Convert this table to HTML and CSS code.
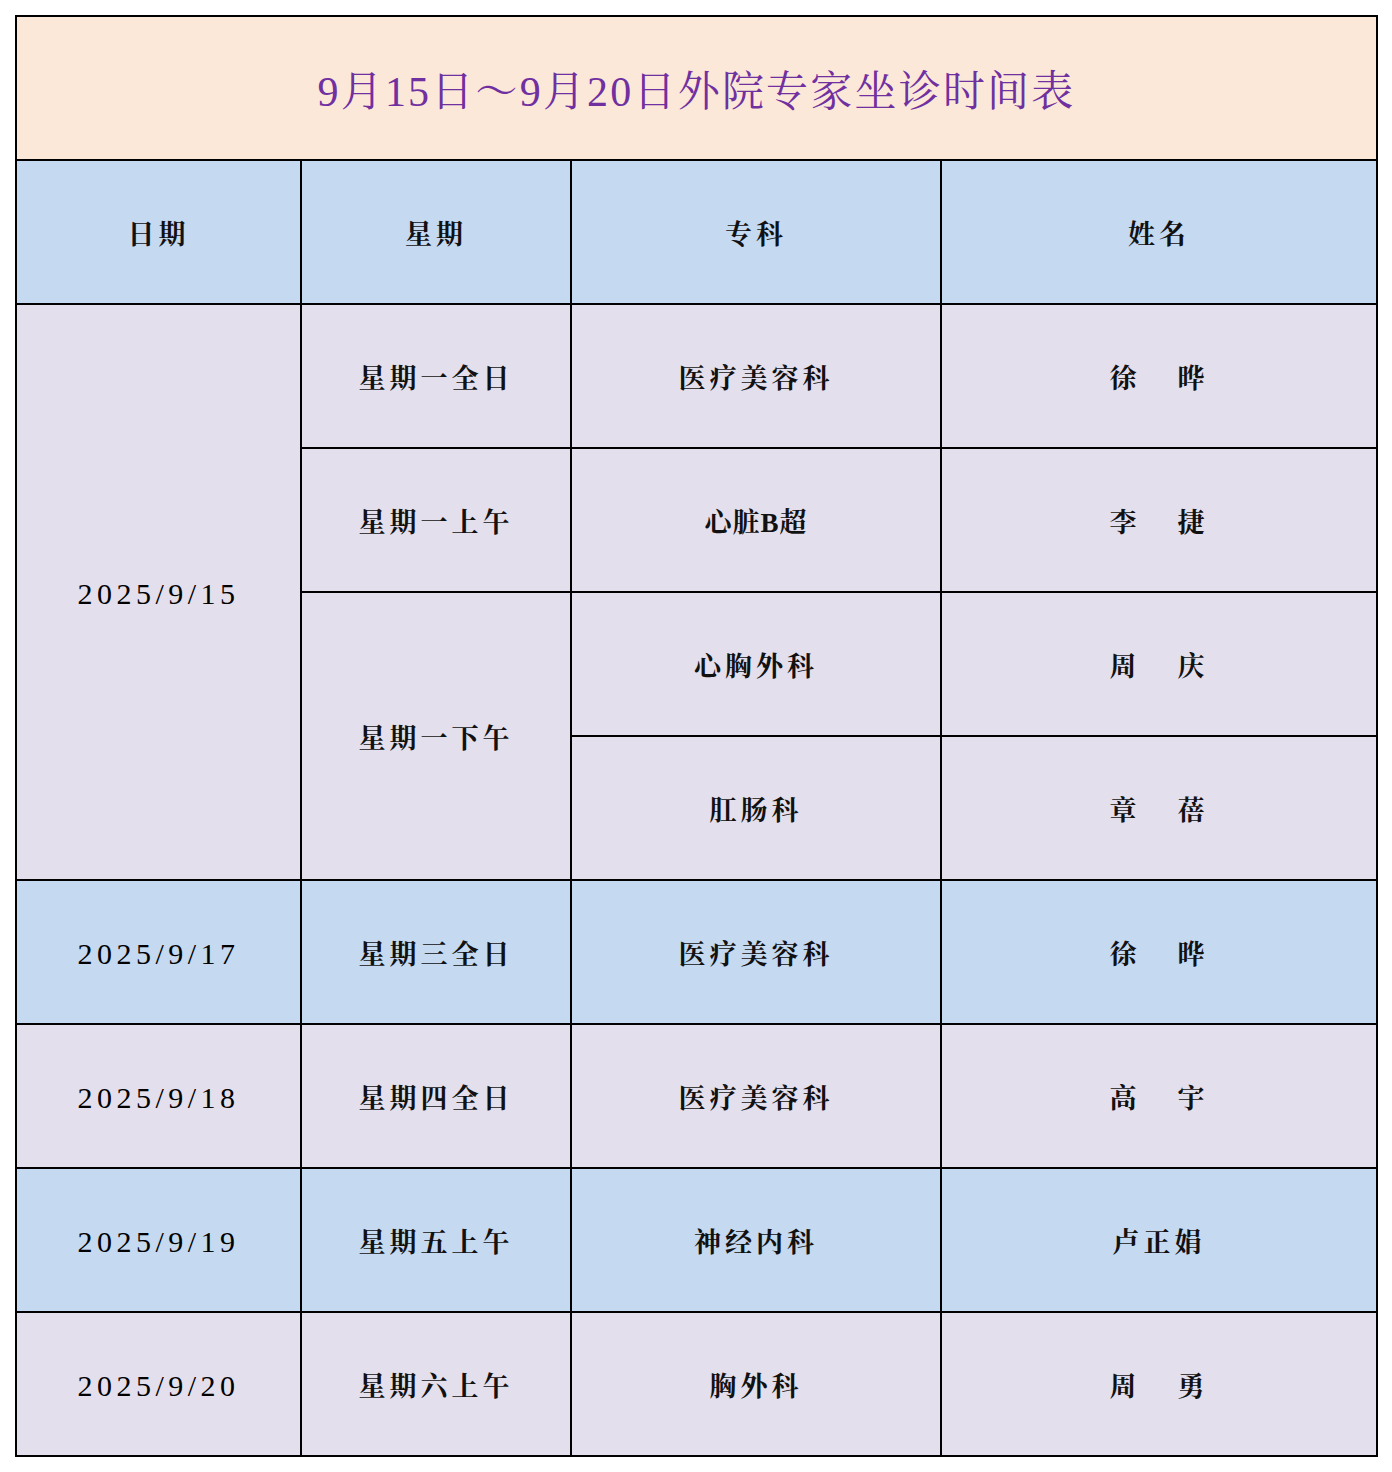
FILE: index.html
```html
<!DOCTYPE html>
<html lang="zh-CN">
<head>
<meta charset="utf-8">
<title>外院专家坐诊时间表</title>
<link rel="stylesheet" href="styles.css">
</head>
<body>
<table class="sched">
  <colgroup>
    <col class="c-date">
    <col class="c-week">
    <col class="c-dept">
    <col class="c-name">
  </colgroup>
  <tr class="r-title"><td colspan="4" class="title">9月15日～9月20日外院专家坐诊时间表</td></tr>
  <tr class="blue"><td>日期</td><td>星期</td><td>专科</td><td>姓名</td></tr>
  <tr class="lav">
    <td rowspan="5" class="num">2025/9/15</td>
    <td>星期一全日</td><td>医疗美容科</td><td>徐<span class="gap"></span>晔</td>
  </tr>
  <tr class="lav"><td>星期一上午</td><td class="tight">心脏B超</td><td>李<span class="gap"></span>捷</td></tr>
  <tr class="lav"><td rowspan="2">星期一下午</td><td>心胸外科</td><td>周<span class="gap"></span>庆</td></tr>
  <tr class="lav"><td>肛肠科</td><td>章<span class="gap"></span>蓓</td></tr>
  <tr class="lav spacer"></tr>
  <tr class="blue"><td class="num">2025/9/17</td><td>星期三全日</td><td>医疗美容科</td><td>徐<span class="gap"></span>晔</td></tr>
  <tr class="lav"><td class="num">2025/9/18</td><td>星期四全日</td><td>医疗美容科</td><td>高<span class="gap"></span>宇</td></tr>
  <tr class="blue"><td class="num">2025/9/19</td><td>星期五上午</td><td>神经内科</td><td>卢正娟</td></tr>
  <tr class="lav"><td class="num">2025/9/20</td><td>星期六上午</td><td>胸外科</td><td>周<span class="gap"></span>勇</td></tr>
</table>
</body>
</html>
```
FILE: styles.css
```css
html, body {
  margin: 0;
  padding: 0;
  background: #ffffff;
}
body {
  padding: 15px 0 0 15px;
  font-family: "Liberation Serif", "Noto Serif CJK SC", "Noto Sans CJK SC", serif;
}
.sched {
  border-collapse: collapse;
  table-layout: fixed;
  width: 1361px;
}
.c-date { width: 285px; }
.c-week { width: 270px; }
.c-dept { width: 370px; }
.c-name { width: 436px; }
.sched td {
  border: 2px solid #000;
  text-align: center;
  vertical-align: middle;
  font-size: 27px;
  letter-spacing: 4px;
  color: #111;
  padding: 0;
  font-weight: 700;
}
.sched tr { height: 144px; }
.sched tr.spacer { height: 0; }
.sched .title {
  background: #fce8d8;
  color: #7030a0;
  font-size: 42px;
  letter-spacing: 2.2px;
  font-weight: 400;
}
.blue td { background: #c5d9f1; }
.lav td { background: #e4dfec; }
.sched .num {
  font-size: 30px;
  letter-spacing: 4.5px;
  font-weight: 400;
  color: #000;
  padding-top: 4px;
}
.sched .tight { letter-spacing: 1px; }
.gap {
  display: inline-block;
  width: 37px;
}
```
